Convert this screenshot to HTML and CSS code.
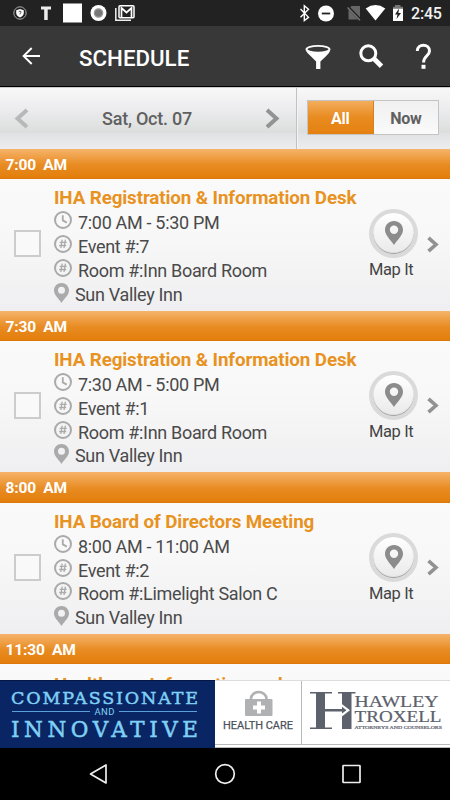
FILE: index.html
```html
<!DOCTYPE html>
<html lang="en">
<head>
<meta charset="utf-8">
<title>Schedule</title>
<link rel="stylesheet" href="styles.css">
</head>
<body>
<svg class="defs" aria-hidden="true">
  <symbol id="clock" viewBox="0 0 18 18"><circle cx="9" cy="9" r="8" fill="none" stroke="#aaa" stroke-width="2"/><path d="M8.800 4.200v5.200l4 2.200" fill="none" stroke="#aaa" stroke-width="1.800"/></symbol>
  <symbol id="hash" viewBox="0 0 18 18"><circle cx="9" cy="9" r="8" fill="none" stroke="#aaa" stroke-width="2"/><path d="M8.200 4.700L6.800 13M11.400 4.700L10 13M5.700 7.300h7M5.200 10.500h7" fill="none" stroke="#aaa" stroke-width="1.300"/></symbol>
  <symbol id="pin" viewBox="0 0 15 20"><path fill-rule="evenodd" d="M7.500 0C3.300 0 0 3.200 0 7.300c0 4.600 4 7.500 7.500 12.700C11 14.800 15 11.900 15 7.300 15 3.200 11.700 0 7.500 0zm0 3.800a3.500 3.500 0 1 1 0 7 3.500 3.500 0 0 1 0-7z" fill="currentColor"/></symbol>
  <symbol id="more" viewBox="0 0 12 17"><path d="M1.500 1.800L9 8.500l-7.500 6.700" fill="none" stroke="#929292" stroke-width="3.600"/></symbol>
</svg>

<div class="status">
  <svg width="140" height="26" viewBox="0 0 140 26">
    <circle cx="20" cy="13" r="6.200" fill="none" stroke="#aaa" stroke-width="1"/>
    <path d="M16.200 10.300l3.800-1.200 3.800 1.200v2.700c0 2.200-1.800 3.600-3.800 4.600-2-1-3.800-2.400-3.800-4.600z" fill="#fff"/><path d="M18.700 11.700q1.300-1.300 2.400 0 .3 1-1.100 1.700v1" fill="none" stroke="#333" stroke-width=".8"/>
    <path d="M41 6.500h10v3h-3.300V20h-3.500V9.500H41z" fill="#eee"/>
    <rect x="63" y="3.500" width="19" height="19" fill="#fff"/>
    <circle cx="98.500" cy="13" r="8" fill="#fff"/><circle cx="98.500" cy="13" r="4.200" fill="#777" stroke="#999" stroke-width="1.200"/>
    <path d="M115.800 8v12.200H131" fill="none" stroke="#eee" stroke-width="1.500"/><rect x="119" y="5.700" width="15" height="12" rx="1" fill="none" stroke="#fff" stroke-width="1.500"/><path d="M121.500 17V8l5 4.500 5-4.500v9" fill="none" stroke="#fff" stroke-width="1.700"/>
  </svg>
  <svg class="sys" width="110" height="26" viewBox="297 0 110 26">
    <path d="M300.500 9l8 8.300-4.200 3.200V5.700l4.200 3.500-8 8" fill="none" stroke="#fff" stroke-width="1.400"/>
    <circle cx="326" cy="13.500" r="8" fill="#fff"/><path d="M321.800 13.500h8.400" stroke="#222" stroke-width="1.800"/>
    <path d="M351.500 6H360v13.500h-11.500V9z" fill="#666"/><path d="M347.500 6.500l13 13.500" stroke="#222" stroke-width="3"/><path d="M347.500 7.500l12.500 12.700" stroke="#777" stroke-width="1.400"/>
    <path d="M365.700 8.500q9.800-6.800 19.600 0L375.500 20.500z" fill="#fff"/>
    <path d="M393 7h10v14h-10z" fill="#fff"/><path d="M393 6.700h2V5h5.500v1.700h2.500v2h-10z" fill="#777"/><path d="M399 8.500l-4 6h2.500L396.500 19l4.500-6h-2.600z" fill="#222"/>
  </svg>
  <span class="time">2:45</span>
</div>

<header class="appbar">
  <svg width="19" height="18" viewBox="0 0 19 18"><path d="M18 9H1.500M9.700 1L1.600 9l8.100 8" fill="none" stroke="#fff" stroke-width="1.900"/></svg>
  <h1>SCHEDULE</h1>
  <svg class="actions" width="130" height="30" viewBox="303 41 130 30">
    <ellipse cx="318" cy="49.300" rx="11.500" ry="3.400" fill="none" stroke="#fff" stroke-width="1.900"/><path d="M305.800 50q2.500 3 12.200 3t12.200-3q-.3 2.500-4.500 6.500l-5.300 5V69h-4.300v-7.500l-5-5q-4.600-4-5.300-6.500z" fill="#fff"/>
    <circle cx="368.300" cy="53.300" r="7.500" fill="none" stroke="#fff" stroke-width="3"/><path d="M373.500 58.300l8 8" stroke="#fff" stroke-width="4.800"/>
    <path d="M417.300 51c0-7.800 12.200-7.800 12.200 0 0 4.800-5.900 5-5.900 11.500" fill="none" stroke="#fff" stroke-width="3"/><rect x="421.500" y="64.800" width="4" height="4" fill="#fff"/>
  </svg>
</header>

<div class="datebar">
  <div class="day">
    <svg width="15" height="21" viewBox="0 0 15 21"><path d="M13 2L3.500 10.500 13 19" fill="none" stroke="#b8b8b8" stroke-width="4"/></svg>
    <span>Sat, Oct. 07</span>
    <svg width="15" height="21" viewBox="0 0 15 21"><path d="M2 2l9.500 8.500L2 19" fill="none" stroke="#929292" stroke-width="4"/></svg>
  </div>
  <div class="filter"><div class="toggle"><span class="on">All</span><span>Now</span></div></div>
</div>

<main class="list">
  <h2>7:00&nbsp; AM</h2>
  <section class="event">
    <i class="check"></i>
    <div class="info">
      <h3>IHA Registration &amp; Information Desk</h3>
      <p><svg><use href="#clock"/></svg>7:00 AM - 5:30 PM</p>
      <p><svg><use href="#hash"/></svg>Event #:7</p>
      <p><svg><use href="#hash"/></svg>Room #:Inn Board Room</p>
      <p class="place"><svg><use href="#pin"/></svg>Sun Valley Inn</p>
    </div>
    <div class="map"><div class="disc"><svg><use href="#pin"/></svg></div>Map It</div>
    <svg class="more"><use href="#more"/></svg>
  </section>
  <h2>7:30&nbsp; AM</h2>
  <section class="event">
    <i class="check"></i>
    <div class="info">
      <h3>IHA Registration &amp; Information Desk</h3>
      <p><svg><use href="#clock"/></svg>7:30 AM - 5:00 PM</p>
      <p><svg><use href="#hash"/></svg>Event #:1</p>
      <p><svg><use href="#hash"/></svg>Room #:Inn Board Room</p>
      <p class="place"><svg><use href="#pin"/></svg>Sun Valley Inn</p>
    </div>
    <div class="map"><div class="disc"><svg><use href="#pin"/></svg></div>Map It</div>
    <svg class="more"><use href="#more"/></svg>
  </section>
  <h2>8:00&nbsp; AM</h2>
  <section class="event">
    <i class="check"></i>
    <div class="info">
      <h3>IHA Board of Directors Meeting</h3>
      <p><svg><use href="#clock"/></svg>8:00 AM - 11:00 AM</p>
      <p><svg><use href="#hash"/></svg>Event #:2</p>
      <p><svg><use href="#hash"/></svg>Room #:Limelight Salon C</p>
      <p class="place"><svg><use href="#pin"/></svg>Sun Valley Inn</p>
    </div>
    <div class="map"><div class="disc"><svg><use href="#pin"/></svg></div>Map It</div>
    <svg class="more"><use href="#more"/></svg>
  </section>
  <h2>11:30&nbsp; AM</h2>
  <section class="event">
    <div class="info last"><h3>Healthcare Information and</h3></div>
  </section>
</main>

<footer class="ad">
  <svg width="450" height="68" viewBox="0 0 450 68">
    <rect width="450" height="68" fill="#fff"/>
    <rect width="215" height="68" fill="#0a2563"/><path d="M0 .5h215" stroke="#061746"/>
    <g fill="#7fd0f5" stroke="#7fd0f5" stroke-width=".5" class="serif">
      <text x="11" y="23.500" font-size="17.500" textLength="187" lengthAdjust="spacing">COMPASSIONATE</text>
      <text x="11" y="57" font-size="21.500" textLength="187" lengthAdjust="spacing">INNOVATIVE</text>
    </g>
    <path d="M12 31.500h78M119 31.500h78" stroke="#5aa0dc"/>
    <text class="sans" x="94.500" y="34.800" font-size="9.500" fill="#7fd0f5" textLength="20">AND</text>
    <path d="M251 19v-1.500a7.700 6.500 0 0 1 15.400 0V19" transform="translate(0 1)" fill="none" stroke="#b0b1b3" stroke-width="2.600"/>
    <rect x="245" y="19" width="27.500" height="17" rx="1" fill="#b0b1b3"/><path d="M259 21.500v12M253 27.500h12" stroke="#fff" stroke-width="4"/>
    <text class="sans" x="223" y="48.700" font-size="11.500" fill="#4b505b" stroke="#4b505b" stroke-width=".25" textLength="70" lengthAdjust="spacingAndGlyphs">HEALTH CARE</text>
    <path d="M301.500 0v64M215 64.500h235M215 67.500h235" stroke="#b9bbbb"/><path d="M215 .5h235" stroke="#ddd"/>
    <path d="M310 12h22v1.500h-7v34h7V49h-22v-1.500h6v-34h-6zM338 12h17.500v1.500h-4V49H342V13.500h-4z" fill="#5c616c"/>
    <path d="M341.500 23.800l8.500 6.400-8.500 6.600z" fill="#fff"/><path d="M325 29h17v-2.200l4.500 3.400-4.500 3.400v-2.200h-17z" fill="#5c616c"/>
    <g class="roman" fill="#5c616c" stroke="#5c616c" stroke-width=".2"><text x="354.500" y="27" font-size="16.500" textLength="84" lengthAdjust="spacingAndGlyphs">HAWLEY</text><text x="354.500" y="42" font-size="16.500" textLength="87" lengthAdjust="spacingAndGlyphs">TROXELL</text><text x="354.500" y="49" font-size="4.800" textLength="87.500" lengthAdjust="spacingAndGlyphs">ATTORNEYS AND COUNSELORS</text></g>
  </svg>
</footer>

<nav class="nav">
  <svg width="450" height="52" viewBox="0 0 450 52" fill="none" stroke="#eee" stroke-width="1.700"><path d="M106 17v18L90.500 26z" stroke-linejoin="round"/><circle cx="225" cy="26" r="9.300"/><rect x="343" y="17.500" width="17" height="17" rx=".5"/></svg>
</nav>
</body>
</html>
```
FILE: styles.css
```css
* { box-sizing: border-box; margin: 0; padding: 0; }
body { width: 450px; height: 800px; overflow: hidden; display: flex; flex-direction: column; background: #000; font-family: Roboto, sans-serif; }
svg { display: block; flex: none; }
.defs { position: absolute; width: 0; height: 0; }
.status { height: 26px; flex: none; background: #222; display: flex; }
.sys { margin-left: 157px; }
.time { margin-left: 4px; color: #f3f3f3; font-size: 16px; font-weight: 500; line-height: 28px; letter-spacing: -.2px; }
.appbar { height: 61px; flex: none; background: #383838; border-bottom: 1px solid #000; display: flex; align-items: center; padding: 0 17px 0 22px; }
.appbar h1 { color: #fff; font-size: 22.300px; font-weight: 500; margin: 3px 0 0 38px; }
.actions { margin-left: auto; }
.datebar { height: 62px; flex: none; display: flex; border-top: 1px solid #ccc; background: linear-gradient(#f8f8f8, #ececee 35%, #dcdedd 72%, #e1e2e4 75%, #ededf0); }
.day { width: 296px; display: flex; align-items: center; justify-content: space-between; padding: 0 16px 0 14px; color: #606060; font-size: 18px; font-weight: 500; letter-spacing: -.25px; }
.filter { flex: 1; border-left: 1px solid #bfc1c2; box-shadow: inset 1px 0 #f5f5f5; padding: 12px 11px 0 10px; }
.toggle { height: 35px; display: flex; border: 1px solid #c4c4c4; }
.toggle span { flex: 1; display: flex; align-items: center; justify-content: center; background: linear-gradient(#f0f0f0, #fafafa); color: #606060; font-size: 16px; font-weight: 700; padding-top: 2px; letter-spacing: -.3px; }
.toggle .on { background: linear-gradient(#f3ad5c, #e88b20 50%, #e58111); color: #fff; border-right: 1px solid #d8801c; }
.list { flex: 1; overflow: hidden; min-height: 0; background: #f9f9f9; }
.list h2 { height: 30.200px; background: linear-gradient(#f6b46b, #e88c23 52%, #e37e0c 96%, #d87308); color: #fff; font-size: 15.500px; line-height: 32px; font-weight: 700; padding-left: 5.500px; letter-spacing: -.15px; }
.event { height: 131.500px; display: flex; background: linear-gradient(#fafafa, #f8f8f8 40%, #efeff1); }
.check { width: 27px; height: 27px; border: 2px solid #ccc; margin: 51px 13px 0 14px; background: #f9f9f9; }
.info { width: 315px; padding-top: 7px; color: #4a4a4a; font-size: 18px; letter-spacing: -.32px; }
.info.last { margin-left: 54px; padding-top: 8.500px; }
.info h3 { height: 24.200px; line-height: 24px; font-size: 18.800px; font-weight: 700; letter-spacing: -.12px; color: #e8921f; white-space: nowrap; }
.info p { height: 23.800px; line-height: 25px; display: flex; white-space: nowrap; }
.info p svg { width: 18px; height: 18px; margin: 1px 6px 0 0; color: #aaa; }
.info .place svg { width: 15px; height: 20px; }
.map { width: 50px; padding-top: 30px; font-size: 16.500px; letter-spacing: -.4px; line-height: 18px; color: #444; white-space: nowrap; }
.disc { width: 49px; height: 49px; border-radius: 50%; border: 4px solid #dadada; background: linear-gradient(#fff, #e9e9e9); box-shadow: inset 0 -1px 1px #999; display: flex; justify-content: center; margin-bottom: 3px; }
.disc svg { width: 18px; height: 24px; margin-top: 8px; color: #8c8c8c; }
.more { width: 12px; height: 17px; margin: 56.500px 0 0 8px; }
.ad { height: 68px; flex: none; }
.serif { font-family: "DejaVu Serif", serif; }
.sans { font-family: Roboto, sans-serif; }
.roman { font-family: "Liberation Serif", serif; }
.nav { height: 52px; flex: none; background: #000; }
```
